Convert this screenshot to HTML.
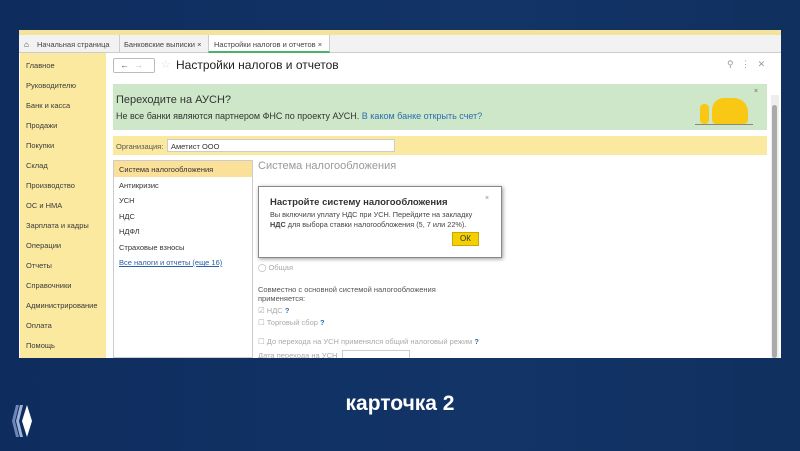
<!DOCTYPE html>
<html><head><meta charset="utf-8"><style>
*{margin:0;padding:0;box-sizing:border-box}
body{width:800px;height:451px;overflow:hidden;background:linear-gradient(90deg,#0f2c5e,#123467 60%,#10305f);font-family:"Liberation Sans",sans-serif;position:relative;font-size:8px;color:#333}
.a{position:absolute;white-space:nowrap}
.win{left:19px;top:30px;width:762px;height:328px;background:#fff;overflow:hidden}
.side div{position:absolute;left:6px;font-size:7.5px;color:#3a3a3a;white-space:nowrap}
.l div{position:absolute;left:6px;font-size:7.5px;color:#333;white-space:nowrap}
</style></head><body>
<div class="a win">
 <div class="a" style="left:0;top:0;width:762px;height:5px;background:#f4e39a"></div>
 <div class="a" style="left:0;top:5px;width:762px;height:18px;background:#f2f2f2;border-bottom:1px solid #ccc"></div>
 <div class="a" style="left:5px;top:10px;font-size:8px">⌂</div>
 <div class="a" style="left:18px;top:10px;font-size:7.5px;color:#444">Начальная страница</div>
 <div class="a" style="left:100px;top:5px;width:1px;height:18px;background:#ccc"></div>
 <div class="a" style="left:105px;top:10px;font-size:7.5px;color:#444">Банковские выписки ×</div>
 <div class="a" style="left:189px;top:5px;width:122px;height:18px;background:#fff;border-bottom:2px solid #4caf6a;border-left:1px solid #ccc;border-right:1px solid #ccc"></div>
 <div class="a" style="left:195px;top:10px;font-size:7.5px;color:#444">Настройки налогов и отчетов ×</div>
 <div class="a side" style="left:1px;top:23px;width:86px;height:305px;background:#fbe9a0">
  <div style="top:8px">Главное</div><div style="top:28px">Руководителю</div><div style="top:48px">Банк и касса</div><div style="top:68px">Продажи</div><div style="top:88px">Покупки</div><div style="top:108px">Склад</div><div style="top:128px">Производство</div><div style="top:148px">ОС и НМА</div><div style="top:168px">Зарплата и кадры</div><div style="top:188px">Операции</div><div style="top:208px">Отчеты</div><div style="top:228px">Справочники</div><div style="top:248px">Администрирование</div><div style="top:268px">Оплата</div><div style="top:288px">Помощь</div>
 </div>
 <div class="a" style="left:94px;top:28px;width:42px;height:15px;border:1px solid #bbb;border-radius:2px;font-size:9px;color:#555;padding-left:6px;line-height:13px">←&nbsp;&nbsp;<span style="color:#bbb">→</span></div>
 <div class="a" style="left:142px;top:28px;font-size:11px;color:#ddd">☆</div>
 <div class="a" style="left:157px;top:28px;font-size:12px;color:#222">Настройки налогов и отчетов</div>
 <div class="a" style="left:708px;top:29px;font-size:9px;color:#999">⚲&nbsp;&nbsp;&nbsp;⋮&nbsp;&nbsp;&nbsp;✕</div>
 <div class="a" style="left:94px;top:54px;width:654px;height:46px;background:#cde7c8"></div>
 <div class="a" style="left:97px;top:64px;font-size:11px;color:#333">Переходите на АУСН?</div>
 <div class="a" style="left:97px;top:81px;font-size:9px;color:#333">Не все банки являются партнером ФНС по проекту АУСН. <span style="color:#2a6fb0">В каком банке открыть счет?</span></div>
 <div class="a" style="left:735px;top:58px;font-size:7px;color:#666">×</div>
 <div class="a" style="left:676px;top:94px;width:58px;height:1px;background:#888"></div>
 <div class="a" style="left:693px;top:68px;width:36px;height:26px;background:#f8c814;border-radius:12px 14px 4px 4px"></div>
 <div class="a" style="left:681px;top:74px;width:9px;height:20px;background:#f8c814;border-radius:4px"></div>
 <div class="a" style="left:94px;top:106px;width:654px;height:19px;background:#fbe9a0"></div>
 <div class="a" style="left:97px;top:112px;font-size:7.5px;color:#555">Организация:</div>
 <div class="a" style="left:148px;top:109px;width:228px;height:13px;background:#fff;border:1px solid #ccc;font-size:7.5px;padding:2px 3px">Аметист ООО</div>
 <div class="a" style="left:94px;top:130px;width:140px;height:198px;border:1px solid #ccc"></div>
 <div class="a" style="left:95px;top:131px;width:138px;height:16px;background:#fbe099"></div>
 <div class="a l" style="left:94px;top:130px">
  <div style="top:5px">Система налогообложения</div><div style="top:21px">Антикризис</div><div style="top:36px">УСН</div><div style="top:52px">НДС</div><div style="top:67px">НДФЛ</div><div style="top:83px">Страховые взносы</div><div style="top:98px;color:#2a5fa6;text-decoration:underline">Все налоги и отчеты (еще 16)</div>
 </div>
 <div class="a" style="left:239px;top:130px;font-size:11px;color:#999">Система налогообложения</div>
 <div class="a" style="left:239px;top:233px;font-size:7.5px;color:#aaa">◯ Общая</div>
 <div class="a" style="left:239px;top:255px;font-size:7.5px;color:#555;line-height:9px">Совместно с основной системой налогообложения<br>применяется:</div>
 <div class="a" style="left:239px;top:276px;font-size:7.5px;color:#aaa">☑ НДС <b style="color:#2a6fb0">?</b></div>
 <div class="a" style="left:239px;top:288px;font-size:7.5px;color:#aaa">☐ Торговый сбор <b style="color:#2a6fb0">?</b></div>
 <div class="a" style="left:239px;top:307px;font-size:7.5px;color:#aaa">☐ До перехода на УСН применялся общий налоговый режим <b style="color:#2a6fb0">?</b></div>
 <div class="a" style="left:239px;top:321px;font-size:7.5px;color:#aaa">Дата перехода на УСН</div>
 <div class="a" style="left:323px;top:320px;width:68px;height:12px;border:1px solid #ccc"></div>
 <div class="a" style="left:239px;top:156px;width:244px;height:72px;background:#fff;border:1px solid #888;box-shadow:1px 1px 4px rgba(0,0,0,.4)"></div>
 <div class="a" style="left:251px;top:167px;font-size:9.5px;font-weight:bold;color:#333">Настройте систему налогообложения</div>
 <div class="a" style="left:466px;top:165px;font-size:7px;color:#888">×</div>
 <div class="a" style="left:251px;top:180px;font-size:7.3px;color:#444;line-height:10px">Вы включили уплату НДС при УСН. Перейдите на закладку<br><b>НДС</b> для выбора ставки налогообложения (5, 7 или 22%).</div>
 <div class="a" style="left:433px;top:202px;width:27px;height:14px;background:#f5d000;border:1px solid #c9a800;font-size:8px;text-align:center;line-height:12px;color:#333">ОК</div>
 <div class="a" style="left:752px;top:65px;width:8px;height:263px;background:#eee"></div>
 <div class="a" style="left:753px;top:75px;width:5px;height:253px;background:#aaa;border-radius:3px"></div>
</div>
<div class="a" style="left:0;top:392px;width:800px;text-align:center;font-size:21px;font-weight:bold;color:#fff">карточка 2</div>
<svg class="a" style="left:12px;top:404px" width="22" height="34" viewBox="0 0 22 34"><path d="M4 1 L0 17 L4 33 L7 33 L3 17 L7 1Z" fill="#6d87b8"/><path d="M8 1 L4 17 L8 33 L11 33 L7 17 L11 1Z" fill="#9fb3d8"/><path d="M15 1 L10 17 L15 33 L20 17Z" fill="#fff"/></svg>
</body></html>
